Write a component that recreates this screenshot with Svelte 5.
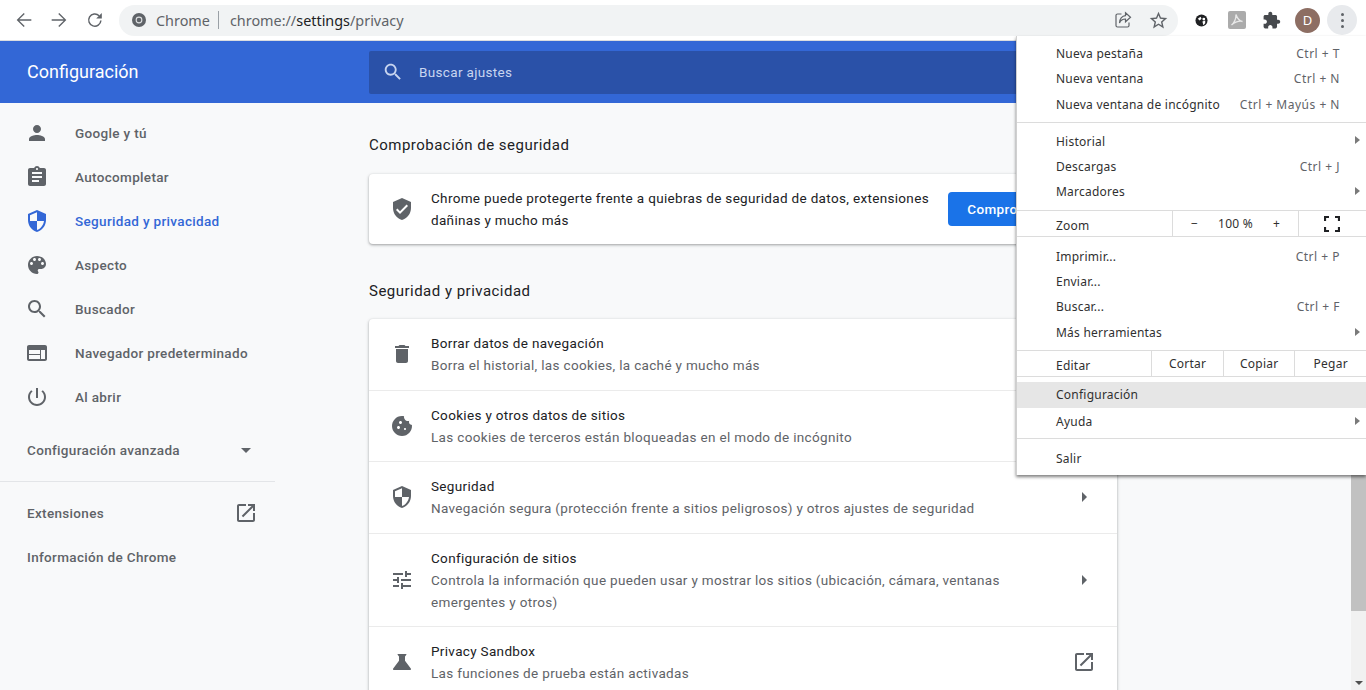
<script>
  const icons = {
    person: 'M12 12c2.21 0 4-1.79 4-4s-1.79-4-4-4-4 1.79-4 4 1.79 4 4 4zm0 2c-2.67 0-8 1.34-8 4v2h16v-2c0-2.66-5.33-4-8-4z',
    assignment: 'M19 3h-4.18C14.4 1.84 13.3 1 12 1c-1.3 0-2.4.84-2.82 2H5c-1.1 0-2 .9-2 2v14c0 1.1.9 2 2 2h14c1.1 0 2-.9 2-2V5c0-1.1-.9-2-2-2zm-7 0c.55 0 1 .45 1 1s-.45 1-1 1-1-.45-1-1 .45-1 1-1zm2 14H7v-2h7v2zm3-4H7v-2h10v2zm0-4H7V7h10v2z',
    shield: 'M12 1L3 5v6c0 5.55 3.84 10.74 9 12 5.16-1.26 9-6.45 9-12V5l-9-4zm0 10.99h7c-.53 4.12-3.28 7.79-7 8.94V12H5V6.3l7-3.11v8.8z',
    palette: 'M12 3c-4.97 0-9 4.03-9 9s4.03 9 9 9c.83 0 1.5-.67 1.5-1.5 0-.39-.15-.74-.39-1.01-.23-.26-.38-.61-.38-.99 0-.83.67-1.5 1.5-1.5H16c2.76 0 5-2.24 5-5 0-4.42-4.03-8-9-8zm-5.5 9c-.83 0-1.5-.67-1.5-1.5S5.67 9 6.5 9 8 9.67 8 10.5 7.33 12 6.5 12zm3-4C8.67 8 8 7.33 8 6.5S8.67 5 9.5 5s1.5.67 1.5 1.5S10.33 8 9.5 8zm5 0c-.83 0-1.5-.67-1.5-1.5S13.67 5 14.5 5s1.5.67 1.5 1.5S15.33 8 14.5 8zm3 4c-.83 0-1.5-.67-1.5-1.5S16.67 9 17.5 9s1.5.67 1.5 1.5-.67 1.5-1.5 1.5z',
    search: 'M15.5 14h-.79l-.28-.27C15.41 12.59 16 11.11 16 9.5 16 5.91 13.09 3 9.5 3S3 5.91 3 9.5 5.91 16 9.5 16c1.61 0 3.09-.59 4.23-1.57l.27.28v.79l5 4.99L20.49 19l-4.99-5zm-6 0C7.01 14 5 11.99 5 9.5S7.01 5 9.5 5 14 7.01 14 9.5 11.99 14 9.5 14z',
    web: 'M20 4H4c-1.1 0-1.99.9-1.99 2L2 18c0 1.1.9 2 2 2h16c1.1 0 2-.9 2-2V6c0-1.1-.9-2-2-2zm-5 14H4v-4h11v4zm0-5H4V9h11v4zm5 5h-4V9h4v9z',
    power: 'M13 3h-2v10h2V3zm4.83 2.17l-1.42 1.42C17.99 7.86 19 9.81 19 12c0 3.87-3.13 7-7 7s-7-3.13-7-7c0-2.19 1.01-4.14 2.58-5.42L6.17 5.17C4.23 6.82 3 9.26 3 12c0 4.97 4.03 9 9 9s9-4.03 9-9c0-2.74-1.23-5.18-3.17-6.83z',
    open: 'M19 19H5V5h7V3H5c-1.11 0-2 .9-2 2v14c0 1.1.89 2 2 2h14c1.1 0 2-.9 2-2v-7h-2v7zM14 3v2h3.59l-9.83 9.83 1.41 1.41L19 6.41V10h2V3h-7z',
    verified: 'M12 1L3 5v6c0 5.55 3.84 10.74 9 12 5.16-1.26 9-6.45 9-12V5l-9-4zm-2 16l-4-4 1.41-1.41L10 14.17l6.59-6.59L18 9l-8 8z',
    trash: 'M6 19c0 1.1.9 2 2 2h8c1.1 0 2-.9 2-2V7H6v12zM19 4h-3.5l-1-1h-5l-1 1H5v2h14V4z',
    cookie: 'M21.95 10.99c-1.79-.03-3.7-1.95-2.68-4.22-2.97 1-5.78-1.59-5.19-4.56C7.11.74 2 6.41 2 12c0 5.52 4.48 10 10 10 5.89 0 10.54-5.08 9.95-11.01zM8.5 15c-.83 0-1.5-.67-1.5-1.5S7.67 12 8.5 12s1.5.67 1.5 1.5S9.33 15 8.5 15zm2-5C9.67 10 9 9.33 9 8.5S9.67 7 10.5 7s1.5.67 1.5 1.5-.67 1.5-1.5 1.5zm4.5 6c-.55 0-1-.45-1-1 0-.55.45-1 1-1s1 .45 1 1c0 .55-.45 1-1 1z',
    tune: 'M3 17v2h6v-2H3zM3 5v2h10V5H3zm10 16v-2h8v-2h-8v-2h-2v6h2zM7 9v2H3v2h4v2h2V9H7zm14 4v-2H11v2h10zm-6-4h2V7h4V5h-4V3h-2v6z',
    flask: 'M15.96 4H8.04c-.42 0-.65.48-.39.81L9 6.5v4.17L3.2 18.4c-.49.66-.02 1.6.8 1.6h16c.82 0 1.29-.94.8-1.6L15 10.67V6.5l1.35-1.69c.26-.33.03-.81-.39-.81z',
    dropdown: 'M7 10l5 5 5-5z',
    dropright: 'M10 17l5-5-5-5v10z',
    back: 'M20 11.25H6.9l5.9-5.9L11.750 4.300 4 12l7.700 7.700 1.050-1.050-5.850-5.900H20z',
    forward: 'M4 11.250h13.100l-5.900-5.900L12.250 4.300 20 12l-7.700 7.700-1.050-1.050 5.850-5.900H4z',
    star: 'M22 9.24l-7.19-.62L12 2 9.19 8.63 2 9.24l5.46 4.73L5.82 21 12 17.27 18.18 21l-1.63-7.03L22 9.24zM12 15.4l-3.76 2.27 1-4.28-3.32-2.88 4.38-.38L12 6.1l1.71 4.04 4.38.38-3.32 2.88 1 4.28L12 15.4z',
    extension: 'M20.5 11H19V7c0-1.1-.9-2-2-2h-4V3.5C13 2.12 11.88 1 10.5 1S8 2.12 8 3.5V5H4c-1.1 0-1.99.9-1.99 2v3.8H3.5c1.49 0 2.7 1.21 2.7 2.7s-1.21 2.7-2.7 2.7H2V20c0 1.1.9 2 2 2h3.8v-1.5c0-1.49 1.21-2.7 2.7-2.7 1.49 0 2.7 1.21 2.7 2.7V22H17c1.1 0 2-.9 2-2v-4h1.5c1.38 0 2.5-1.12 2.5-2.5S21.88 11 20.5 11z'
  };

  const navItems = [
    { label: 'Google y tú', icon: 'person' },
    { label: 'Autocompletar', icon: 'assignment' },
    { label: 'Seguridad y privacidad', icon: 'shield', active: true },
    { label: 'Aspecto', icon: 'palette' },
    { label: 'Buscador', icon: 'search' },
    { label: 'Navegador predeterminado', icon: 'web' },
    { label: 'Al abrir', icon: 'power' }
  ];

  const rows = [
    { icon: 'trash', title: 'Borrar datos de navegación', sub: 'Borra el historial, las cookies, la caché y mucho más', end: 'dropright' },
    { icon: 'cookie', title: 'Cookies y otros datos de sitios', sub: 'Las cookies de terceros están bloqueadas en el modo de incógnito', end: 'dropright' },
    { icon: 'shield', title: 'Seguridad', sub: 'Navegación segura (protección frente a sitios peligrosos) y otros ajustes de seguridad', end: 'dropright' },
    { icon: 'tune', title: 'Configuración de sitios', sub: 'Controla la información que pueden usar y mostrar los sitios (ubicación, cámara, ventanas emergentes y otros)', end: 'dropright' },
    { icon: 'flask', title: 'Privacy Sandbox', sub: 'Las funciones de prueba están activadas', end: 'open' }
  ];

  const menuTop = [
    [
      { label: 'Nueva pestaña', key: 'Ctrl + T' },
      { label: 'Nueva ventana', key: 'Ctrl + N' },
      { label: 'Nueva ventana de incógnito', key: 'Ctrl + Mayús + N' }
    ],
    [
      { label: 'Historial', sub: true },
      { label: 'Descargas', key: 'Ctrl + J' },
      { label: 'Marcadores', sub: true }
    ]
  ];

  const menuTools = [
    { label: 'Imprimir...', key: 'Ctrl + P' },
    { label: 'Enviar...' },
    { label: 'Buscar...', key: 'Ctrl + F' },
    { label: 'Más herramientas', sub: true }
  ];
</script>

{#snippet icon(name, size = 24)}
  <svg width={size} height={size} viewBox="0 0 24 24" fill="currentColor"><path d={icons[name]} /></svg>
{/snippet}

{#snippet menuItem(item)}
  <div class="menu-item" class:hover={item.hover}>
    <span>{item.label}</span>
    {#if item.key}<span class="key">{item.key}</span>{/if}
    {#if item.sub}<span class="sub-arrow"></span>{/if}
  </div>
{/snippet}

<div class="window">
  <header class="toolbar">
    <button class="tool nav">{@render icon('back', 22)}</button>
    <button class="tool nav">{@render icon('forward', 22)}</button>
    <button class="tool nav" aria-label="Recargar">
      <svg width="20" height="20" viewBox="0 0 20 20">
        <path d="M15.900 10.500a6.100 6.100 0 1 1-1.800-4.800" fill="none" stroke="currentColor" stroke-width="1.500" />
        <path d="M16.800 3v5.600h-5.600z" fill="currentColor" />
      </svg>
    </button>
    <div class="omnibox">
      <svg class="chrome-logo" width="14" height="14" viewBox="0 0 14 14">
        <circle cx="7" cy="7" r="7" fill="#5f6368" />
        <circle cx="7" cy="7" r="3.400" fill="#dfe1e3" />
        <circle cx="7" cy="7" r="2.300" fill="#5f6368" />
      </svg>
      <span class="site">Chrome</span>
      <span class="omni-sep"></span>
      <span class="url">chrome://<b>settings</b>/privacy</span>
      <span class="omni-actions">
        <svg width="18" height="18" viewBox="0 0 18 18" fill="none" stroke="#5f6368" stroke-width="1.200">
          <path d="M7.500 3H3.500A1.500 1.500 0 0 0 2 4.500V14.500A1.500 1.500 0 0 0 3.500 16H13.500A1.500 1.500 0 0 0 15 14.500V11.500" />
          <path d="M11.500 1.800L16.500 6.300L11.500 10.800V8C8.500 8 6.500 9.500 5.500 12C5.500 8 8 4.800 11.500 4.600Z" />
        </svg>
        {@render icon('star', 21)}
      </span>
    </div>
    <span class="ext-slot">
      <svg width="13" height="13" viewBox="0 0 14 14">
        <circle cx="7" cy="7" r="6.500" fill="#202124" />
        <path d="M3 5l3-2 1 2-2 2zM8 8l3-1 0 3-2 2z" fill="#fff" />
        <circle cx="9.500" cy="5.500" r="1.500" fill="#fff" />
      </svg>
    </span>
    <span class="ext-slot">
      <span class="pdf">
        <svg width="14" height="14" viewBox="0 0 14 14" fill="none" stroke="#e8e8e8" stroke-width="1.300">
          <path d="M6 1.500C6 5 4.500 9.500 1.500 12C4 9.500 9 7.500 12.500 8.500C9.500 8 7 4.500 6 1.500Z" />
        </svg>
      </span>
    </span>
    <span class="ext-slot puzzle">{@render icon('extension', 19)}</span>
    <span class="ext-slot avatar-slot"><span class="avatar">D</span></span>
    <button class="tool more" aria-label="Más">
      <i></i><i></i><i></i>
    </button>
  </header>

  <div class="page">
    <div class="page-main">
      <div class="banner">
        <h1>Configuración</h1>
        <div class="searchbox">
          {@render icon('search', 22)}
          <span>Buscar ajustes</span>
        </div>
      </div>

      <div class="columns">
        <nav class="sidebar">
          {#each navItems as item}
            <div class="nav-item" class:active={item.active}>
              <span class="nav-icon">{@render icon(item.icon)}</span>
              {item.label}
            </div>
          {/each}
          <div class="advanced">
            Configuración avanzada
            {@render icon('dropdown')}
          </div>
          <div class="side-sep"></div>
          <div class="side-link">
            Extensiones
            {@render icon('open')}
          </div>
          <div class="side-link">Información de Chrome</div>
        </nav>

        <main class="content">
          <h2>Comprobación de seguridad</h2>
          <section class="card check">
            <span class="row-icon">{@render icon('verified')}</span>
            <p>Chrome puede protegerte frente a quiebras de seguridad de datos, extensiones dañinas y mucho más</p>
            <button class="primary">Comprobar ahora</button>
          </section>

          <h2 class="second">Seguridad y privacidad</h2>
          <section class="card">
            {#each rows as row}
              <div class="row">
                <span class="row-icon">{@render icon(row.icon)}</span>
                <div class="row-text">
                  <div class="row-title">{row.title}</div>
                  <div class="row-sub">{row.sub}</div>
                </div>
                <span class="row-end">{@render icon(row.end)}</span>
              </div>
            {/each}
          </section>
        </main>
      </div>
    </div>

    <div class="scrollbar">
      <div class="thumb"></div>
      <div class="track"></div>
      <div class="scroll-down"></div>
    </div>
  </div>

  <div class="menu">
    {#each menuTop as group}
      <div class="menu-group">
        {#each group as item}
          {@render menuItem(item)}
        {/each}
      </div>
    {/each}
    <div class="menu-split zoom">
      <span class="split-label">Zoom</span>
      <span class="zoom-ctl"><span>−</span><span>100 %</span><span>+</span></span>
      <span class="zoom-full">
        <svg width="16" height="16" viewBox="0 0 16 16" fill="none" stroke="#202124" stroke-width="2.200">
          <path d="M1 5V1H5M11 1H15V5M15 11V15H11M5 15H1V11" />
        </svg>
      </span>
    </div>
    <div class="menu-group tools">
      {#each menuTools as item}
        {@render menuItem(item)}
      {/each}
    </div>
    <div class="menu-split edit">
      <span class="split-label">Editar</span>
      <span class="edit-btn">Cortar</span>
      <span class="edit-btn">Copiar</span>
      <span class="edit-btn">Pegar</span>
    </div>
    <div class="menu-group settings">
      {@render menuItem({ label: 'Configuración', hover: true })}
      {@render menuItem({ label: 'Ayuda', sub: true })}
    </div>
    <div class="menu-group exit">
      {@render menuItem({ label: 'Salir' })}
    </div>
  </div>
</div>

<style>
  :global(body) {
    margin: 0;
    background: #f8f9fa;
  }

  .window {
    position: relative;
    width: 1366px;
    height: 690px;
    overflow: hidden;
    font-family: Roboto, sans-serif;
    display: flex;
    flex-direction: column;
  }

  button {
    border: 0;
    background: none;
    padding: 0;
    font: inherit;
  }

  /* toolbar */
  .toolbar {
    height: 40px;
    background: #fff;
    border-bottom: 1px solid #dadce0;
    display: flex;
    align-items: center;
    padding-left: 6px;
    font-family: 'Noto Sans', sans-serif;
  }

  .tool {
    display: flex;
    align-items: center;
    justify-content: center;
    color: #5f6368;
  }

  .nav {
    width: 35.500px;
    height: 30px;
  }

  .omnibox {
    margin-left: 6.500px;
    width: 1059px;
    height: 31px;
    box-sizing: border-box;
    border-radius: 16px;
    background: #f1f3f4;
    display: flex;
    align-items: center;
    padding: 0 9px 0 13px;
    font-size: 14.400px;
    color: #5f6368;
  }

  .chrome-logo {
    margin-right: 10px;
  }

  .omni-sep {
    width: 1px;
    height: 18px;
    background: #9aa0a6;
    margin: 0 11px 0 8px;
  }

  .url b {
    font-weight: 400;
    color: #202124;
  }

  .omni-actions {
    margin-left: auto;
    display: flex;
    align-items: center;
    gap: 16.500px;
    color: #5f6368;
  }

  .ext-slot {
    width: 35px;
    display: flex;
    justify-content: center;
    align-items: center;
  }

  .ext-slot:first-of-type {
    margin-left: 6px;
  }

  .avatar-slot {
    margin-left: 1px;
  }

  .pdf {
    width: 18px;
    height: 18px;
    background: #ababab;
    border-radius: 2px;
    display: flex;
    align-items: center;
    justify-content: center;
  }

  .puzzle {
    color: #46494d;
  }

  .avatar {
    width: 25px;
    height: 25px;
    border-radius: 50%;
    background: #8d6e63;
    color: #fff;
    font-size: 13px;
    display: flex;
    align-items: center;
    justify-content: center;
  }

  .more {
    width: 30px;
    height: 30px;
    border-radius: 50%;
    background: #e8eaed;
    flex-direction: column;
    gap: 3px;
    margin-left: 2px;
  }

  .more i {
    width: 3px;
    height: 3px;
    border-radius: 50%;
    background: #5f6368;
  }

  /* page */
  .page {
    flex: 1;
    display: flex;
    min-height: 0;
    background: #f8f9fa;
  }

  .page-main {
    flex: 1;
    min-width: 0;
    display: flex;
    flex-direction: column;
  }

  .banner {
    height: 62px;
    flex: none;
    background: #3367d6;
    display: flex;
    align-items: center;
    color: #fff;
  }

  .banner h1 {
    margin: 0 0 2px;
    width: 342px;
    padding-left: 27px;
    font-size: 18px;
    font-weight: 400;
  }

  .searchbox {
    width: 748px;
    height: 43px;
    border-radius: 2px;
    background: #2a51a8;
    display: flex;
    align-items: center;
    gap: 15px;
    padding-left: 13px;
    box-sizing: border-box;
    color: #c8d5f0;
    font-size: 13.500px;
    letter-spacing: 0.330px;
  }

  .columns {
    flex: 1;
    display: flex;
    min-height: 0;
  }

  .sidebar {
    width: 275px;
    flex: none;
    padding-top: 8px;
    font-size: 13.500px;
    letter-spacing: 0.330px;
    font-weight: 500;
    color: #5f6368;
  }

  .nav-item {
    height: 44px;
    display: flex;
    align-items: center;
    padding-left: 25px;
  }

  .nav-item.active {
    color: #3367d6;
  }

  .nav-icon {
    width: 50px;
    display: flex;
  }

  .advanced {
    margin-top: 9px;
    height: 44px;
    display: flex;
    align-items: center;
    justify-content: space-between;
    padding: 0 17px 0 27px;
  }

  .side-sep {
    height: 1px;
    background: #e3e5e8;
    margin: 9px 0 9px;
  }

  .side-link {
    height: 44px;
    display: flex;
    align-items: center;
    justify-content: space-between;
    padding: 0 17px 0 27px;
  }

  .content {
    width: 748px;
    margin-left: 94px;
    color: #202124;
  }

  h2 {
    margin: 0;
    padding-top: 32px;
    height: 39px;
    font-size: 15px;
    letter-spacing: 0.480px;
    font-weight: 400;
    line-height: 20px;
  }

  h2.second {
    padding-top: 37px;
    height: 38px;
  }

  .card {
    background: #fff;
    border-radius: 4px;
    box-shadow: 0 1px 2px rgba(60, 64, 67, 0.3), 0 1px 3px 1px rgba(60, 64, 67, 0.15);
  }

  .check {
    height: 70px;
    display: flex;
    align-items: center;
    padding: 0 20px 0 21px;
    font-size: 13.500px;
    letter-spacing: 0.330px;
  }

  .check p {
    margin: 0;
    flex: 1;
    line-height: 22px;
    padding-right: 10px;
  }

  .primary {
    height: 34px;
    width: 149px;
    flex: none;
    border-radius: 4px;
    background: #1a73e8;
    color: #fff;
    font-size: 13.500px;
    letter-spacing: 0.330px;
    font-weight: 500;
  }

  .row-icon {
    width: 41px;
    flex: none;
    display: flex;
    color: #5f6368;
  }

  .row {
    display: flex;
    align-items: center;
    padding: 13.250px 21px;
    border-top: 1px solid #ebebeb;
  }

  .row:first-child {
    border-top: 0;
  }

  .row-text {
    flex: 1;
    font-size: 13.500px;
    letter-spacing: 0.330px;
    line-height: 22px;
    padding-right: 60px;
  }

  .row-sub {
    color: #5f6368;
  }

  .row-end {
    display: flex;
    color: #5f6368;
  }

  /* scrollbar */
  .scrollbar {
    width: 15px;
    flex: none;
    background: #f1f1f1;
    display: flex;
    flex-direction: column;
  }

  .thumb {
    height: 570px;
    background: #c1c1c1;
  }

  .track {
    flex: 1;
  }

  .scroll-down {
    align-self: center;
    margin-bottom: 5px;
    width: 0;
    height: 0;
    border-left: 4px solid transparent;
    border-right: 4px solid transparent;
    border-top: 4px solid #505050;
  }

  /* app menu */
  .menu {
    position: absolute;
    top: 36px;
    left: 1016px;
    width: 350px;
    height: 439px;
    box-sizing: border-box;
    padding-top: 5px;
    background: #fff;
    border-left: 1px solid #d0d0d0;
    box-shadow: 0 2px 3px rgba(0, 0, 0, 0.5);
    font-family: 'Noto Sans', sans-serif;
    font-size: 12px;
    letter-spacing: 0.230px;
    color: #303030;
  }

  .menu-group {
    padding-bottom: 5px;
  }

  .menu-group + .menu-group {
    border-top: 1px solid #dcdcdc;
    padding-top: 5.500px;
    padding-bottom: 6px;
  }

  .menu-group.tools {
    padding: 6.400px 0 5.400px;
  }

  .menu-group.settings {
    padding: 5px 0 4px;
  }

  .settings .menu-item + .menu-item {
    margin-top: 1px;
  }

  .menu-group.exit {
    padding-top: 7px;
  }

  .menu-item {
    position: relative;
    height: 25.300px;
    display: flex;
    align-items: center;
    justify-content: space-between;
    padding: 0 26px 0 39px;
  }

  .menu-item.hover {
    background: #e6e6e6;
  }

  .key {
    color: #5f6368;
    letter-spacing: 0.500px;
  }

  .sub-arrow {
    position: absolute;
    right: 6px;
    top: 8px;
    border-left: 5px solid #7a7a7a;
    border-top: 4.500px solid transparent;
    border-bottom: 4.500px solid transparent;
  }

  .menu-split {
    height: 25px;
    display: flex;
    align-items: center;
    border-top: 1px solid #dcdcdc;
    border-bottom: 1px solid #dcdcdc;
  }

  .split-label {
    padding-left: 39px;
    padding-top: 3px;
  }

  .zoom .split-label {
    width: 116px;
  }

  .zoom-ctl {
    width: 127px;
    height: 100%;
    box-sizing: border-box;
    border-left: 1px solid #dcdcdc;
    border-right: 1px solid #dcdcdc;
    display: flex;
    align-items: center;
    justify-content: space-between;
    padding: 0 18px;
  }

  .zoom-full {
    flex: 1;
    display: flex;
    justify-content: center;
    padding: 1px 1px 0 0;
  }

  .edit .split-label {
    width: 96px;
  }

  .edit-btn {
    width: 71px;
    height: 100%;
    border-left: 1px solid #dcdcdc;
    display: flex;
    align-items: center;
    justify-content: center;
  }
</style>
